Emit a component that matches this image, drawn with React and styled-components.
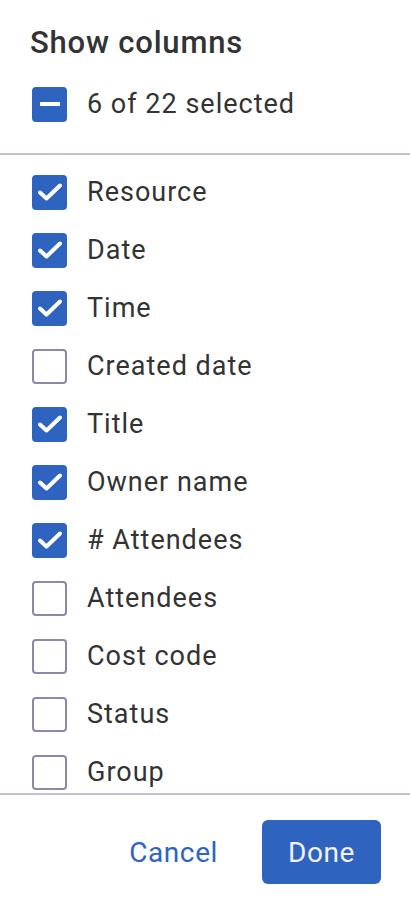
import React, { useState } from 'react';
import styled, { createGlobalStyle } from 'styled-components';

const GlobalStyle = createGlobalStyle`
  html, body {
    margin: 0;
    padding: 0;
    background: #fff;
    font-family: Roboto, 'Liberation Sans', sans-serif;
    color: #333333;
  }
  * { box-sizing: border-box; }
`;

const Panel = styled.div`
  width: 410px;
  height: 905px;
  display: flex;
  flex-direction: column;
  background: #fff;
  overflow: hidden;
`;

const Header = styled.div`
  padding: 24px 30px 0;
`;

const Title = styled.h2`
  margin: 0;
  font-size: 31px;
  font-weight: 500;
  letter-spacing: 0.8px;
  line-height: 38px;
  color: #333;
`;

const Divider = styled.div`
  height: 2px;
  background: #c1c3d3;
  flex-shrink: 0;
`;

const List = styled.div`
  flex: 1;
  overflow: hidden;
  padding: 8px 0 0 0;
`;

const Row = styled.label`
  display: flex;
  align-items: center;
  gap: 20px;
  height: 58px;
  padding: ${(p) => (p.$head ? '0 2px' : '0 32px')};
  margin: ${(p) => (p.$head ? '13px 0 20px' : '0')};
  font-size: 27px;
  letter-spacing: 1px;
  color: #333;
  cursor: pointer;
`;

const Box = styled.span`
  width: 35px;
  height: 35px;
  flex-shrink: 0;
  border-radius: 4px;
  display: flex;
  align-items: center;
  justify-content: center;
  background: ${(p) => (p.$on ? '#2e63c0' : '#fff')};
  border: ${(p) => (p.$on ? 'none' : '2px solid #8c88a8')};
`;

const Footer = styled.div`
  display: flex;
  justify-content: flex-end;
  align-items: center;
  gap: 44px;
  padding: 25px 29px 21px;
`;

const TextButton = styled.button`
  border: none;
  background: none;
  padding: 0;
  font-family: inherit;
  font-size: 28px;
  letter-spacing: 0.6px;
  color: #2e63c0;
  cursor: pointer;
`;

const PrimaryButton = styled.button`
  border: none;
  width: 119px;
  height: 64px;
  border-radius: 6px;
  background: #2e63c0;
  color: #f2f2f2;
  font-family: inherit;
  font-size: 28px;
  letter-spacing: 0.6px;
  cursor: pointer;
`;

const Check = () => (
  <svg width="24" height="18" viewBox="0 0 24 18">
    <path d="M2 9.5 L8.5 15.5 L22 2.5" fill="none" stroke="#fff" strokeWidth="4" strokeLinecap="round" strokeLinejoin="round" />
  </svg>
);

const Minus = () => (
  <svg width="20" height="4" viewBox="0 0 20 4">
    <rect x="0" y="0" width="20" height="4" fill="#fff" />
  </svg>
);

const initialColumns = [
  { name: 'Resource', on: true },
  { name: 'Date', on: true },
  { name: 'Time', on: true },
  { name: 'Created date', on: false },
  { name: 'Title', on: true },
  { name: 'Owner name', on: true },
  { name: '# Attendees', on: true },
  { name: 'Attendees', on: false },
  { name: 'Cost code', on: false },
  { name: 'Status', on: false },
  { name: 'Group', on: false },
];

export default function App() {
  const [columns, setColumns] = useState(initialColumns);

  const toggle = (i) =>
    setColumns((cols) => cols.map((c, j) => (j === i ? { ...c, on: !c.on } : c)));

  return (
    <>
      <GlobalStyle />
      <Panel>
        <Header>
          <Title>Show columns</Title>
          <Row $head>
            <Box $on><Minus /></Box>
            6 of 22 selected
          </Row>
        </Header>
        <Divider />
        <List>
          {columns.map((c, i) => (
            <Row key={c.name} onClick={() => toggle(i)}>
              <Box $on={c.on}>{c.on && <Check />}</Box>
              {c.name}
            </Row>
          ))}
        </List>
        <Divider />
        <Footer>
          <TextButton>Cancel</TextButton>
          <PrimaryButton>Done</PrimaryButton>
        </Footer>
      </Panel>
    </>
  );
}
